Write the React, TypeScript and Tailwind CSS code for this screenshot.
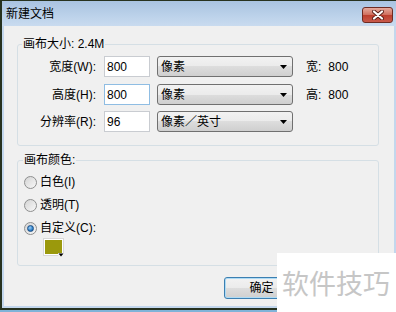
import React from 'react';

const Arrow: React.FC = () => (
  <svg width="7" height="4" viewBox="0 0 7 4" className="ml-auto mr-[5px]">
    <path d="M0 0h7L3.5 4z" fill="#000" />
  </svg>
);

const Select: React.FC<{ value: string }> = ({ value }) => (
  <div className="ml-[7px] flex h-[21px] w-[136px] items-center rounded-[3px] border border-[#707070] bg-[linear-gradient(#f2f2f2,#ebebeb_50%,#dddddd_50%,#cfcfcf)] pl-[3px]">
    <span>{value}</span>
    <Arrow />
  </div>
);

const Radio: React.FC<{ checked?: boolean; label: string }> = ({ checked, label }) => (
  <div className="flex h-[14px] items-center pl-[6px]">
    <span className="flex h-[13px] w-[13px] items-center justify-center rounded-full border border-[#8e8f8f] bg-[linear-gradient(135deg,#d4d4d4,#f8f8f8)]">
      {checked && (
        <span className="h-[7px] w-[7px] rounded-full border border-[#1b4f86] bg-[radial-gradient(circle_at_40%_35%,#9fd0f5,#2d7fc8_60%,#164f8a)]" />
      )}
    </span>
    <span className="ml-[3px] leading-[14px]">{label}</span>
  </div>
);

type Row = {
  label: string;
  value: string;
  unit: string;
  focus?: boolean;
  info?: [string, string];
};

const rows: Row[] = [
  { label: '宽度(W):', value: '800', unit: '像素', info: ['宽:', '800'] },
  { label: '高度(H):', value: '800', unit: '像素', focus: true, info: ['高:', '800'] },
  { label: '分辨率(R):', value: '96', unit: '像素／英寸' },
];

export default function App() {
  return (
    <div className="relative h-[312px] w-[396px] overflow-hidden bg-[#7fb3d8] font-['Liberation_Sans','Noto_Sans_CJK_SC',sans-serif] text-[12px] text-black">
      <div className="flex h-[310px] flex-col border-b-2 border-l-2 border-t border-[#27321f] bg-[#c3d7ed]">
        {/* title bar */}
        <div className="flex h-[25px] items-center bg-[linear-gradient(#a9c3e1,#bcd2ea_60%,#c9dbef)] pl-[4px] pr-[3px]">
          <span className="leading-[14px]">新建文档</span>
          <div className="ml-auto mt-[3px] flex h-[16px] w-[31px] items-center justify-center rounded-[3px] border border-[#6e2b22] bg-[linear-gradient(#e6aa9c,#d0705f_48%,#bd3f2d_52%,#c8594a)]">
            <svg width="12" height="10" viewBox="0 0 12 10">
              <path d="M2 1.5l8 7M10 1.5l-8 7" stroke="#5a2018" strokeWidth="4" strokeLinecap="round" />
              <path d="M2 1.5l8 7M10 1.5l-8 7" stroke="#fff" strokeWidth="2.2" strokeLinecap="round" />
            </svg>
          </div>
        </div>

        {/* client area */}
        <div className="mb-[2px] ml-[2px] mr-[2px] flex-1 bg-[#f0f0f0]">
          {/* canvas size group */}
          <div className="relative ml-[13px] mt-[18px] h-[102px] w-[362px] rounded-[3px] border border-[#d5dfe5]">
            <span className="absolute left-[4px] top-[-8px] bg-[#f0f0f0] px-[1px] leading-[14px]">画布大小: 2.4M</span>
            <div className="flex flex-col pt-[11px]">
              {rows.map((r, i) => (
                <div key={r.label} className={`flex h-[21px] items-center ${i === 1 ? 'mt-[7px]' : i === 2 ? 'mt-[6px]' : ''}`}>
                  <span className="w-[78px] text-right">{r.label}</span>
                  <div
                    className={`ml-[8px] flex h-[21px] w-[46px] items-center border bg-white pl-[2px] ${
                      r.focus ? 'border-[#8fbde3]' : 'border-[#c9ccd1]'
                    }`}
                  >
                    {r.value}
                  </div>
                  <Select value={r.unit} />
                  {r.info && (
                    <span className="ml-[13px]">
                      {r.info[0]}
                      <span className="ml-[7px]">{r.info[1]}</span>
                    </span>
                  )}
                </div>
              ))}
            </div>
          </div>

          {/* canvas color group */}
          <div className="relative ml-[13px] mt-[14px] h-[106px] w-[362px] rounded-[3px] border border-[#d5dfe5]">
            <span className="absolute left-[5px] top-[-8px] bg-[#f0f0f0] px-[1px] leading-[14px]">画布颜色:</span>
            <div className="flex flex-col gap-[9px] pt-[14px]">
              <Radio label="白色(I)" />
              <Radio label="透明(T)" />
              <Radio checked label="自定义(C):" />
            </div>
            <div className="relative ml-[25px] mt-[3px] h-[18px] w-[21px] border border-[#d8d8d8] bg-white p-[1px]">
              <div className="h-full w-full bg-[#9b990c]" />
              <svg width="6" height="4" viewBox="0 0 6 4" className="absolute bottom-[-2px] right-[-1px]">
                <rect width="6" height="4" fill="#f0f0f0" />
                <path d="M0.5 0.5h5L3 3.5z" fill="#000" />
              </svg>
            </div>
          </div>

          {/* buttons */}
          <div className="ml-[220px] mt-[11px] flex">
            <div className="flex h-[22px] w-[75px] items-center justify-center rounded-[3px] border border-[#3c7fb1] bg-[linear-gradient(#f2f2f2,#ebebeb_50%,#dddddd_50%,#cfcfcf)] shadow-[inset_0_0_0_1px_#aedbf5]">
              确定
            </div>
          </div>
        </div>
      </div>

      {/* watermark */}
      <div className="absolute left-[277px] top-[253px] flex h-[59px] w-[119px] items-center bg-white pl-[5px]">
        <span className="font-['Noto_Sans_CJK_SC',sans-serif] text-[27px] leading-none text-[#c6c6c6]">软件技巧</span>
      </div>
    </div>
  );
}
